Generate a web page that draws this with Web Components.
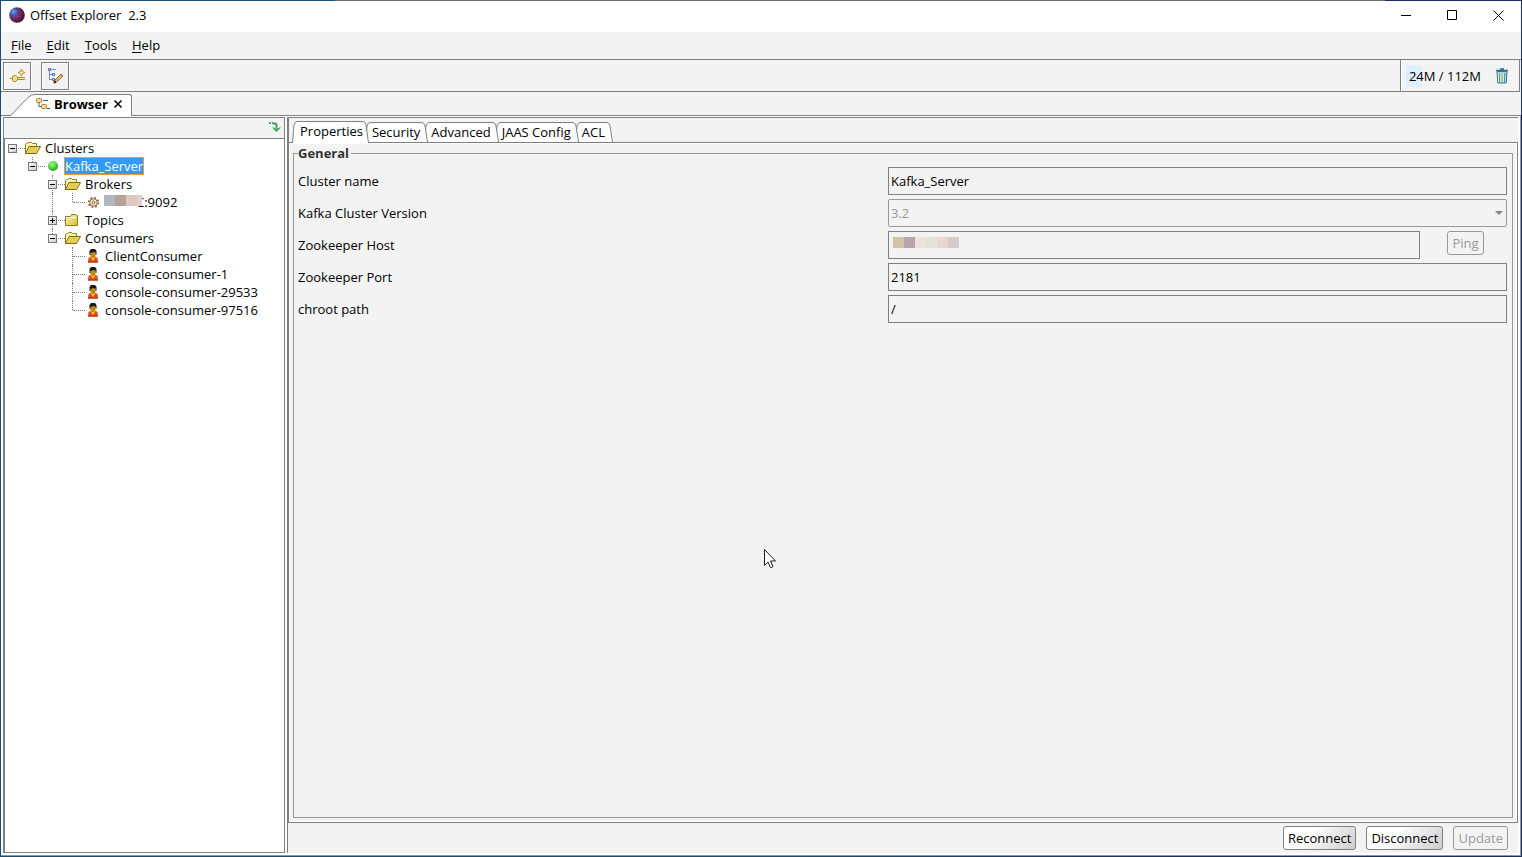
<!DOCTYPE html>
<html lang="en">
<head>
<meta charset="utf-8">
<title>Offset Explorer 2.3</title>
<style>
  html, body { margin: 0; height: 100%; }
  body { font: 13px/18px "Open Sans", "Noto Sans", sans-serif; color: #000; overflow: hidden; }
</style>
</head>
<body>
<offset-explorer></offset-explorer>
<script>
const base = `*,:host{box-sizing:border-box}
  button,input,select{font:inherit;color:inherit;margin:0;padding:0;border:0;border-radius:0;background:none;outline:0}
  svg{display:block}`;

function define(name, css, html) {
  customElements.define(name, class extends HTMLElement {
    connectedCallback() {
      if (this.shadowRoot) return;
      const root = this.attachShadow({ mode: 'open' });
      root.innerHTML = `<style>${base}${css}</style>` + (typeof html === 'function' ? html(this) : html);
    }
  });
}

const icons = {
  open: `<svg width="16" height="14" viewBox="0 0 16 14"><path d="M.5 12.5v-9l1-1h1l1-1h3l1 1h4v3" fill="#fff6ae" stroke="#8e7b20"/><path d="M.5 12.5 4 5.500h11.500L11.500 12.500z" fill="#eed96a" stroke="#7d6b12"/><path d="M4.500 7h8M4 9h8M3 11h8" stroke="#d8bd45"/></svg>`,
  closed: `<svg width="16" height="14" viewBox="0 0 16 14"><defs><linearGradient id="f" x2="1" y2="1"><stop stop-color="#fffbc0"/><stop offset="1" stop-color="#d9b92c"/></linearGradient></defs><path d="M.5 12.500V3.500h5l1-2h4l1 1h1v10z" fill="url(#f)" stroke="#8e7b20"/><path d="M1 4.500h10" stroke="#fffce0"/></svg>`,
  online: `<svg width="16" height="14" viewBox="0 0 16 14"><defs><radialGradient id="g" cx=".4" cy=".3" r=".7"><stop stop-color="#a5f58a"/><stop offset=".6" stop-color="#4cd03d"/><stop offset="1" stop-color="#2b9e28"/></radialGradient></defs><circle cx="8" cy="7" r="5" fill="url(#g)"/></svg>`,
  gear: `<svg width="16" height="14" viewBox="0 0 16 14"><circle cx="8.500" cy="7.500" r="4.800" fill="none" stroke="#7e5a32" stroke-width="1.600" stroke-dasharray="1.900 1.870"/><circle cx="8.500" cy="7.500" r="3.800" fill="#f6e3c8" stroke="#94683a"/><circle cx="8.500" cy="7.500" r="1.400" fill="#fff" stroke="#7e5a32"/></svg>`,
  user: `<svg width="16" height="16" viewBox="0 0 16 16"><path d="M3 14.500 3.500 10 6 8.500h4l2.500 1.500.5 4.500z" fill="#e04a1c"/><path d="M3 13.500h10v1H3z" fill="#a82a12"/><path d="m5.500 9 2.500 4 2.500-4z" fill="#ffcf2c"/><path d="M5.500 3h5v5L9 10H7L5.500 8z" fill="#c08a12"/><path d="M4.500 7V3L6 1h4l1.500 2v4l-1-.5V4.500L8.500 4 5.500 5v2z" fill="#1d1712"/></svg>`
};

/* Title bar */
define('title-bar', `
  :host{display:flex;height:31px;flex:none;background:#fff;align-items:center;padding-bottom:3px}
  .logo{margin:0 5px 0 8px}
  h1{flex:1;margin:0;font:inherit;white-space:pre}
  button{width:46px;height:28px;display:grid;place-items:center}
`, `
  <svg class="logo" width="16" height="16" viewBox="0 0 16 16"><defs><radialGradient id="a" cx=".28" cy=".3" r=".8"><stop stop-color="#7aa5f0"/><stop offset=".3" stop-color="#3b4fa5"/><stop offset=".6" stop-color="#742552"/><stop offset="1" stop-color="#35102c"/></radialGradient></defs><circle cx="8" cy="8" r="7.800" fill="url(#a)"/><path d="M5 5v6M8 3v8M4 9h8" stroke="#b04c8a" opacity=".45"/></svg>
  <h1>Offset Explorer  2.3</h1>
  <button aria-label="Minimize"><svg width="11" height="11"><path d="M0 5.500h10" stroke="#000"/></svg></button>
  <button aria-label="Maximize"><svg width="11" height="11"><path d="M.5.5h9v9h-9z" fill="none" stroke="#000"/></svg></button>
  <button aria-label="Close"><svg width="11" height="11"><path d="m.5.5 10 10m0-10-10 10" stroke="#000"/></svg></button>
`);

/* Menu bar */
define('menu-bar', `
  :host{display:flex;height:28px;flex:none;border-bottom:1px solid #808080;padding:0 0 1px 10px;gap:15px;align-items:center}
`, `<slot></slot>`);
define('menu-entry', `
  :host{display:block}
  button{height:22px}
  span{text-decoration:underline;text-underline-offset:2px;text-decoration-skip-ink:none}
`, el => `<button><span>${el.dataset.label[0]}</span>${el.dataset.label.slice(1)}</button>`);

/* Tool bar */
define('tool-bar', `
  :host{display:flex;height:32px;flex:none;border-bottom:1px solid #808080;padding-left:2px;gap:10px;align-items:center;margin-right:1px;border-right:1px solid #808080}
  .tool{width:28px;height:28px;border:1px solid #808080;display:grid;place-items:center;box-shadow:inset 1px 1px #fff,1px 1px #fff}
  .memory{margin-left:auto;height:31px;border-left:1px solid #808080;display:flex;align-items:center;padding:0 10px 0 5px;gap:11px;box-shadow:inset 1px 0 #fff}
  .used{padding:2px 3px;background:linear-gradient(90deg,#def 16px,transparent 0)}
`, `
  <button class="tool" aria-label="Add connection"><svg width="18" height="18" viewBox="0 0 18 18"><path d="m13.500 2 1 2.500L17 5.500l-2.500 1-1 2.500-1-2.500-2.500-1 2.500-1z" fill="#fff3c0" stroke="#b58a18"/><path d="M2 11.500h3M9 10.500h8M9 12.500h8" stroke="#b58a18"/><path d="M5.500 8.500h2l2 1.500v3l-2 1.500h-2L4.500 13v-3z" fill="#f0dc90" stroke="#b58a18"/></svg></button>
  <button class="tool" aria-label="Edit connection"><svg width="18" height="18" viewBox="0 0 18 18"><path d="M3.500 4v9M4 7.500h4M4 12.500h4M5 2.500h5" stroke="#6f86bf" fill="none"/><g fill="#dfe8ff" stroke="#4c68ad"><path d="M2.500 1.500h2v2h-2zM6.500 6.500h2v2h-2zM6.500 11.500h2v2h-2z"/></g><path d="m8 16 1-3 6-6 2 2-6.500 6z" fill="#e7b876" stroke="#8d6537"/><path d="m8 16 .5-2 1.500 1z" fill="#222" stroke="#222"/></svg></button>
  <div class="memory"><span class="used">24M / 112M</span>
  <button aria-label="Run garbage collector"><svg width="14" height="16" viewBox="0 0 14 16"><path d="M2 3.500h10l-.8 11.500H2.800z" fill="#a9d6dc" stroke="#2f7598"/><path d="M4.500 5v9M7 5v9M9.500 5v9" stroke="#5a97a6"/><path d="M3.500 5v9M5.800 5v9M8.300 5v9" stroke="#e6f0b8"/><path d="M1 2.500h12M5 1h4" stroke="#2f7598" stroke-width="1.500"/></svg></button></div>
`);

/* Document tab strip */
define('document-tabs', `
  :host{display:flex;height:24px;flex:none;border-bottom:1px solid #808080;padding:2px 0 0 9px}
  .tab{display:flex;height:22px}
  .body{display:flex;align-items:center;background:#fff;border:solid #808080;border-width:1px 1px 0 0;border-top-right-radius:3px;height:22px;padding:0 7px 3px 0;gap:3px;font-weight:700}
  .close{display:grid;place-items:center;width:12px;height:16px;margin-left:1px}
`, `
  <div class="tab">
    <svg width="25" height="22" viewBox="0 0 25 22"><path d="M0 22 18 3.500Q21 .5 25 .5V22z" fill="#fff"/><path d="M0 21.500Q2 21 3 19L18 3.500Q21 .5 25 .5" fill="none" stroke="#808080"/></svg>
    <div class="body">
      <svg width="16" height="14" viewBox="0 0 16 14"><path d="M4 5v4.500h2M8 3.500h5M12 11.500h3" stroke="#24689d" fill="none"/><rect x="1.500" y="1.500" width="5" height="4" rx="1" fill="#f8dc98" stroke="#b27f34"/><rect x="6.500" y="7.500" width="5" height="4" rx="1" fill="#f8dc98" stroke="#b27f34"/></svg>
      <span>Browser</span>
      <button class="close" aria-label="Close Browser"><svg width="8" height="8"><path d="m.5.5 7 7m0-7-7 7" stroke="#000" stroke-width="1.500"/></svg></button>
    </div>
  </div>
`);

/* Tree */
define('tree-row', `
  :host{display:flex;height:18px;align-items:center;white-space:pre}
  .guide{width:20px;height:18px;flex:none;position:relative}
  .v{height:100%;border-left:1px dotted #808080;margin-left:7px}
  .v.half{height:9px}
  .h{position:absolute;left:8px;width:12px;top:9px;border-top:1px dotted #808080}
  button{position:absolute;left:3px;top:5px;width:9px;height:9px;background:linear-gradient(135deg,#fff,#ccc);border:1px solid #777}
  button::before,button.plus::after{content:"";position:absolute;left:1px;top:3px;width:5px;height:1px;background:#000}
  button.plus::after{left:3px;top:1px;width:1px;height:5px}
  .icon{width:16px;flex:none;margin-right:3px}
  .label{border:1px solid transparent;height:18px;line-height:16px}
  :host([selected]) .label{background:#3399ff;color:#fff;border-color:#f0a020}
`, el => {
  const guides = (el.dataset.guides || '').split('').map((g, i, all) => {
    const last = i === all.length - 1;
    const v = g === '|' || g === 't' ? '<div class="v"></div>' : g === 'l' ? '<div class="v half"></div>' : '';
    const e = el.dataset.toggle;
    return `<div class="guide">${v}${last ? '<div class="h"></div>' + (e ? `<button class="${e}" aria-label="Toggle"></button>` : '') : ''}</div>`;
  }).join('');
  return `${guides}<span class="icon">${icons[el.dataset.icon]}</span><span class="label"><slot></slot></span>`;
});

/* Coloured block strip that covers a private value */
define('redacted-value', `
  :host{display:inline-flex;height:11px;flex:none}
  i{width:11px;height:11px;flex:none}
`, el => el.dataset.colors.split(' ').map(c => `<i style="background:${c}"></i>`).join(''));

define('cluster-browser', `
  :host{display:flex;flex-direction:column;width:282px;flex:none;border:1px solid #808080}
  .bar{height:21px;flex:none;border-bottom:1px solid #808080;display:flex;justify-content:flex-end;align-items:center;padding:0 3px 2px 0}
  .tree{flex:1;background:#fff;border-left:1px solid #808080}
  .address{display:flex;align-items:center;height:16px}
  redacted-value{margin:0 -6px 3px -1px;position:relative;width:38px;overflow:hidden}
`, `
  <div class="bar"><button aria-label="Collapse tree"><svg width="12" height="12" viewBox="0 0 12 12"><path d="M0 2h2M3 2h1M4 2.500h2Q7.500 2.500 7.500 4V8" stroke="#3fa25c" stroke-width="2" fill="none"/><path d="M3 6.500h2l2.500 2 2.500-2h2L7.500 11z" fill="#3fa25c"/></svg></button></div>
  <div class="tree" role="tree">
    <tree-row data-guides="-" data-toggle="minus" data-icon="open">Clusters</tree-row>
    <tree-row data-guides=" l" data-toggle="minus" data-icon="online" selected>Kafka_Server</tree-row>
    <tree-row data-guides="  t" data-toggle="minus" data-icon="open">Brokers</tree-row>
    <tree-row data-guides="  |l" data-icon="gear"><span class="address"><redacted-value data-colors="#b1b6c0 #b7a097 #dfc7bb #dfcfd1"></redacted-value>C:9092</span></tree-row>
    <tree-row data-guides="  t" data-toggle="plus" data-icon="closed">Topics</tree-row>
    <tree-row data-guides="  l" data-toggle="minus" data-icon="open">Consumers</tree-row>
    <tree-row data-guides="   t" data-icon="user">ClientConsumer</tree-row>
    <tree-row data-guides="   t" data-icon="user">console-consumer-1</tree-row>
    <tree-row data-guides="   t" data-icon="user">console-consumer-29533</tree-row>
    <tree-row data-guides="   l" data-icon="user">console-consumer-97516</tree-row>
  </div>
`);

/* Property tabs */
define('property-tab', `
  :host{display:block;margin-right:-4px;position:relative}
  button{display:flex;height:20px}
  svg{flex:none}
  span{background:#fff;border-top:1px solid #808080;height:20px;padding:0 2px;white-space:nowrap}
  :host([selected]) button{height:22px}
  :host([selected]) span{height:22px;padding:0 0 0 3px}
`, el => { const h = el.hasAttribute('selected') ? 22 : 20; return `
  <button role="tab"><svg width="5" height="${h}"><path d="M0 ${h} 2 4Q3 .5 5 .5V${h}z" fill="#fff"/><path d="M.5 ${h} 2 4Q3 .5 5 .5" fill="none" stroke="#808080"/></svg><span><slot></slot></span><svg width="6" height="${h}"><path d="M0 .5Q2 .5 3 4L5.500 ${h}H0z" fill="#fff"/><path d="M0 .5Q2 .5 3 4L5.500 ${h}" fill="none" stroke="#808080"/></svg></button>`; });

/* Push button */
define('push-button', `
  :host{display:block}
  button{height:24px;padding:0 4px;border:1px solid #808080;border-radius:3px;background:linear-gradient(135deg,#fff,#fff 35%,#ccc);display:block;line-height:20px;white-space:nowrap}
  button:disabled{color:#999;border-color:#999;background:none}
`, el => `<button ${el.hasAttribute('disabled') ? 'disabled' : ''}><slot></slot></button>`);

/* Property form */
define('property-form', `
  :host{display:flex;flex:1;min-height:0}
  fieldset{flex:1;margin:0;min-width:0;padding:5px 5px 0 4px;border:1px solid #999}
  legend{font-weight:700;color:#333;padding:0 2px 0 0;line-height:18px}
  .row{display:grid;grid-template-columns:590fr 619fr;align-items:center;height:28px;margin-bottom:4px}
  input,select{width:100%;height:28px;border:1px solid #808080;padding:0 2px}
  select{appearance:none;border-color:#999;border-radius:2px;color:#999;opacity:1}
  .field{position:relative}
  .arrow{position:absolute;right:4px;top:12px;pointer-events:none}
  .host{display:grid;grid-template-columns:1fr 87px}
  .host push-button{justify-self:center;padding-left:4px}
  .mask{position:absolute;left:5px;top:6px}
`, `
  <fieldset><legend>General</legend>
    <div class="row"><label for="name">Cluster name</label><input id="name" value="Kafka_Server" readonly></div>
    <div class="row"><label for="version">Kafka Cluster Version</label><div class="field"><select id="version" disabled><option>3.2</option></select><svg class="arrow" width="8" height="5"><path d="M0 0h8L4 4z" fill="#888"/></svg></div></div>
    <div class="row"><label for="host">Zookeeper Host</label><div class="field host"><input id="host" readonly><redacted-value class="mask" data-colors="#d5c3a6 #b9a5b0 #ece3da #e2e4d9 #e6d7cf #d8caca"></redacted-value><push-button disabled>Ping</push-button></div></div>
    <div class="row"><label for="port">Zookeeper Port</label><input id="port" value="2181" readonly></div>
    <div class="row"><label for="chroot">chroot path</label><input id="chroot" value="/" readonly></div>
  </fieldset>
`);

define('property-panel', `
  :host{display:flex;flex-direction:column;flex:1;min-width:0;border-top:1px solid #808080;border-left:1px solid #808080;margin-right:2px}
  .tabs{display:flex;align-items:flex-end;height:24px;flex:none;padding:0 0 0 3px;border-left:1px solid #808080}
  property-tab:nth-child(1){z-index:5;margin-bottom:-1px}
  property-tab:nth-child(2){z-index:4}
  property-tab:nth-child(3){z-index:3}
  property-tab:nth-child(4){z-index:2}
  .page{display:flex;flex:1;border:1px solid #808080;padding:1px 4px 4px;min-height:0;box-shadow:inset 1px 1px #fff,inset -1px -1px #fff}
  .actions{display:flex;justify-content:flex-end;gap:10px;padding:3px 10px;height:30px;flex:none}
`, `
  <div class="tabs" role="tablist">
    <property-tab selected>Properties</property-tab>
    <property-tab>Security</property-tab>
    <property-tab>Advanced</property-tab>
    <property-tab>JAAS Config</property-tab>
    <property-tab>ACL</property-tab>
  </div>
  <div class="page"><property-form></property-form></div>
  <div class="actions"><push-button>Reconnect</push-button><push-button>Disconnect</push-button><push-button disabled>Update</push-button></div>
`);

define('mouse-pointer', `
  :host{position:absolute;left:764px;top:549px;pointer-events:none}
`, `<svg width="13" height="20" viewBox="0 0 13 20"><path d="M.5.5v16l3.500-3.500 2.500 5.500q1.500.5 2.500-1L6.500 12h5z" fill="#fff" stroke="#1c1c2a"/></svg>`);

/* Window frame */
define('offset-explorer', `
  :host{display:flex;height:100vh;padding:1px;background:linear-gradient(90deg,transparent 22%,#6f6f6f 0,#6f6f6f 91%,transparent 0) 0 0/100% 1px no-repeat,linear-gradient(90deg,#1b4f72 0,#1b4f72 50%,#1b2f5f 80%)}
  .window{flex:1;min-width:0;display:flex;flex-direction:column;background:#f3f3f3}
  .content{flex:1;min-height:0;display:flex;gap:2px;background:#fff;padding:1px 0 2px 2px;border:solid #999;border-width:0 1px 1px 0}
  cluster-browser,property-panel{background:#f3f3f3}
`, `
  <div class="window">
    <title-bar></title-bar>
    <menu-bar><menu-entry data-label="File"></menu-entry><menu-entry data-label="Edit"></menu-entry><menu-entry data-label="Tools"></menu-entry><menu-entry data-label="Help"></menu-entry></menu-bar>
    <tool-bar></tool-bar>
    <document-tabs></document-tabs>
    <div class="content"><cluster-browser></cluster-browser><property-panel></property-panel></div>
  </div>
  <mouse-pointer></mouse-pointer>
`);
</script>
</body>
</html>
